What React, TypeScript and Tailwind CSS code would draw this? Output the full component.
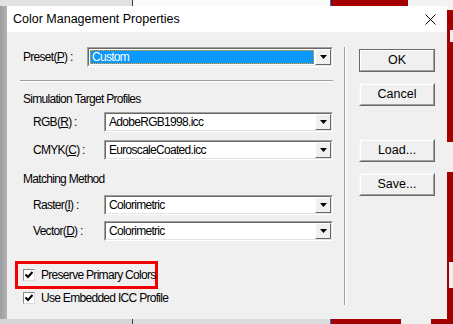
import React from 'react';

const font = { fontFamily: '"Liberation Sans", Arial, sans-serif' };

function Mnemonic({ pre, letter, post }: { pre: string; letter: string; post: string }) {
  return (
    <span className="whitespace-nowrap">
      {pre}
      <u className="underline-offset-[1px]">{letter}</u>
      {post}
    </span>
  );
}

function DropButton() {
  return (
    <div className="flex h-full w-[16px] items-center justify-center border border-t-white border-l-white border-b-[#696969] border-r-[#696969] bg-[#f0f0f0]">
      <svg width="7" height="4" viewBox="0 0 7 4">
        <polygon points="0,0 7,0 3.5,4" fill="#000" />
      </svg>
    </div>
  );
}

function Combo({ value, selected }: { value: string; selected?: boolean }) {
  return (
    <div className="flex h-[20px] flex-1 border border-t-[#a0a0a0] border-l-[#a0a0a0] border-b-white border-r-white">
      <div className="flex flex-1 border border-t-[#696969] border-l-[#696969] border-b-[#e3e3e3] border-r-[#e3e3e3] bg-white">
        <div className="flex flex-1 items-center p-[1px]">
          {selected ? (
            <div className="flex h-full flex-1 items-center border border-dotted border-[#ff9a00] bg-[#0a98fa] pl-[1px] text-white">
              {value}
            </div>
          ) : (
            <div className="pl-[2px] text-black">{value}</div>
          )}
        </div>
        <DropButton />
      </div>
    </div>
  );
}

function Row({ label, value, indent }: { label: React.ReactNode; value: string; indent?: boolean }) {
  return (
    <div className="flex h-[20px] items-center">
      <div className={indent ? 'w-[84px] pl-[13px]' : 'w-[67px] pl-[3px]'}>{label}</div>
      <Combo value={value} />
    </div>
  );
}

function Check({ label }: { label: string }) {
  return (
    <div className="flex h-[12px] items-center whitespace-nowrap">
      <div className="flex h-[12px] w-[12px] shrink-0 items-center justify-center border border-t-[#8a8a8a] border-l-[#8a8a8a] border-b-[#dcdcdc] border-r-[#dcdcdc] bg-white">
        <svg width="8" height="8" viewBox="0 0 8 8">
          <polyline points="0.5,3.5 3,6 7.5,1" fill="none" stroke="#000" strokeWidth="2" />
        </svg>
      </div>
      <span className="pl-[6px]">{label}</span>
    </div>
  );
}

function WinButton({ label, isDefault }: { label: string; isDefault?: boolean }) {
  return (
    <div
      className={
        'flex h-[23px] w-[76px] items-center justify-center border ' +
        (isDefault
          ? 'border-[#696969]'
          : 'border-t-[#f5f5f5] border-l-[#f5f5f5] border-b-[#696969] border-r-[#696969]')
      }
    >
      <div className="flex h-full w-full items-center justify-center border border-t-white border-l-white border-b-[#a0a0a0] border-r-[#a0a0a0] bg-[#f0f0f0] text-[12.5px]">
        {label}
      </div>
    </div>
  );
}

export default function App() {
  return (
    <div className="flex h-[324px] w-[453px] flex-col overflow-hidden bg-[#a8a8a8]" style={font}>
      {/* top strip of the desktop */}
      <div className="flex h-[6px]">
        <div className="w-[132px] bg-[#e1e1e1]" />
        <div className="w-[1px] bg-[#3c3c3c]" />
        <div className="w-[197px] bg-[#fbfbfb]" />
        <div className="w-[1px] bg-[#1e6fd9]" />
        <div className="w-[77px] bg-[#a40000]" />
        <div className="flex-1 bg-[#f3f3f3]" />
      </div>

      <div className="flex h-[313px]">
        <div className="w-[7px] bg-gradient-to-r from-[#9c9c9c] to-[#b4b4b4]" />

        {/* dialog */}
        <div className="flex w-[440px] flex-col bg-[#f0f0f0] text-[12px] tracking-[-0.7px] text-black">
          <div className="flex h-[26px] items-center justify-between bg-white pl-[6px] pr-[11px] text-[12.5px] tracking-normal">
            <span>Color Management Properties</span>
            <svg width="11" height="11" viewBox="0 0 11 11" className="mt-[1px]">
              <path d="M0.5 0.5 L10.5 10.5 M10.5 0.5 L0.5 10.5" stroke="#000" strokeWidth="1" />
            </svg>
          </div>

          <div className="flex flex-1">
            {/* left column */}
            <div className="ml-[13px] flex w-[313px] flex-col">
              <div className="mt-[15px] flex h-[20px] items-center">
                <div className="w-[67px] pl-[3px]">
                  <Mnemonic pre="Preset(" letter="P" post=") :" />
                </div>
                <Combo value="Custom" selected />
              </div>

              <div className="mt-[13px] h-[2px] border-t border-t-[#a0a0a0] border-b border-b-white" />

              <div className="mt-[10px] flex h-[14px] items-center pl-[3px]">Simulation Target Profiles</div>

              <div className="mt-[6px]">
                <Row indent label={<Mnemonic pre="RGB(" letter="R" post=") :" />} value="AdobeRGB1998.icc" />
              </div>
              <div className="mt-[8px]">
                <Row indent label={<Mnemonic pre="CMYK(" letter="C" post=") :" />} value="EuroscaleCoated.icc" />
              </div>

              <div className="mt-[12px] flex h-[14px] items-center pl-[3px]">Matching Method</div>

              <div className="mt-[9px]">
                <Row indent label={<Mnemonic pre="Raster(" letter="I" post=") :" />} value="Colorimetric" />
              </div>
              <div className="mt-[6px]">
                <Row indent label={<Mnemonic pre="Vector(" letter="D" post=") :" />} value="Colorimetric" />
              </div>

              <div className="-ml-[5px] mt-[20px] flex h-[28px] w-[143px] items-center border-[3px] border-[#f00000] pl-[5px]">
                <Check label="Preserve Primary Colors" />
              </div>
              <div className="mt-[3px] pl-[3px]">
                <Check label="Use Embedded ICC Profile" />
              </div>
            </div>

            {/* vertical separator */}
            <div className="ml-[11px] mt-[15px] h-[258px] w-[2px] border-l border-l-[#a0a0a0] border-r border-r-white" />

            {/* buttons */}
            <div className="ml-[13px] mt-[17px] flex flex-col tracking-normal">
              <WinButton label="OK" isDefault />
              <div className="mt-[11px]">
                <WinButton label="Cancel" />
              </div>
              <div className="mt-[33px]">
                <WinButton label="Load..." />
              </div>
              <div className="mt-[11px]">
                <WinButton label="Save..." />
              </div>
            </div>
          </div>
        </div>

        {/* red wallpaper edge */}
        <div className="flex flex-1 flex-col bg-[#a40000]">
          <div className="h-[4px] bg-[#f3f3f3]" />
          <div className="h-[20px]" />
          <div className="ml-[3px] h-[12px] bg-[#f0f0f0]" />
          <div className="h-[100px]" />
          <div className="h-[30px] bg-[#f0f0f0]" />
          <div className="h-[90px]" />
          <div className="ml-[2px] h-[26px] bg-[#f0f0f0]" />
        </div>
      </div>

      {/* bottom strip */}
      <div className="flex flex-1">
        <div className="w-[132px] bg-[#d6d6d6]" />
        <div className="w-[1px] bg-[#3c3c3c]" />
        <div className="w-[197px] bg-[#dcdcdc]" />
        <div className="w-[1px] bg-[#1e6fd9]" />
        <div className="w-[70px] bg-[#a40000]" />
        <div className="w-[30px] bg-[#f0f0f0]" />
        <div className="flex-1 bg-[#a40000]" />
      </div>
    </div>
  );
}
